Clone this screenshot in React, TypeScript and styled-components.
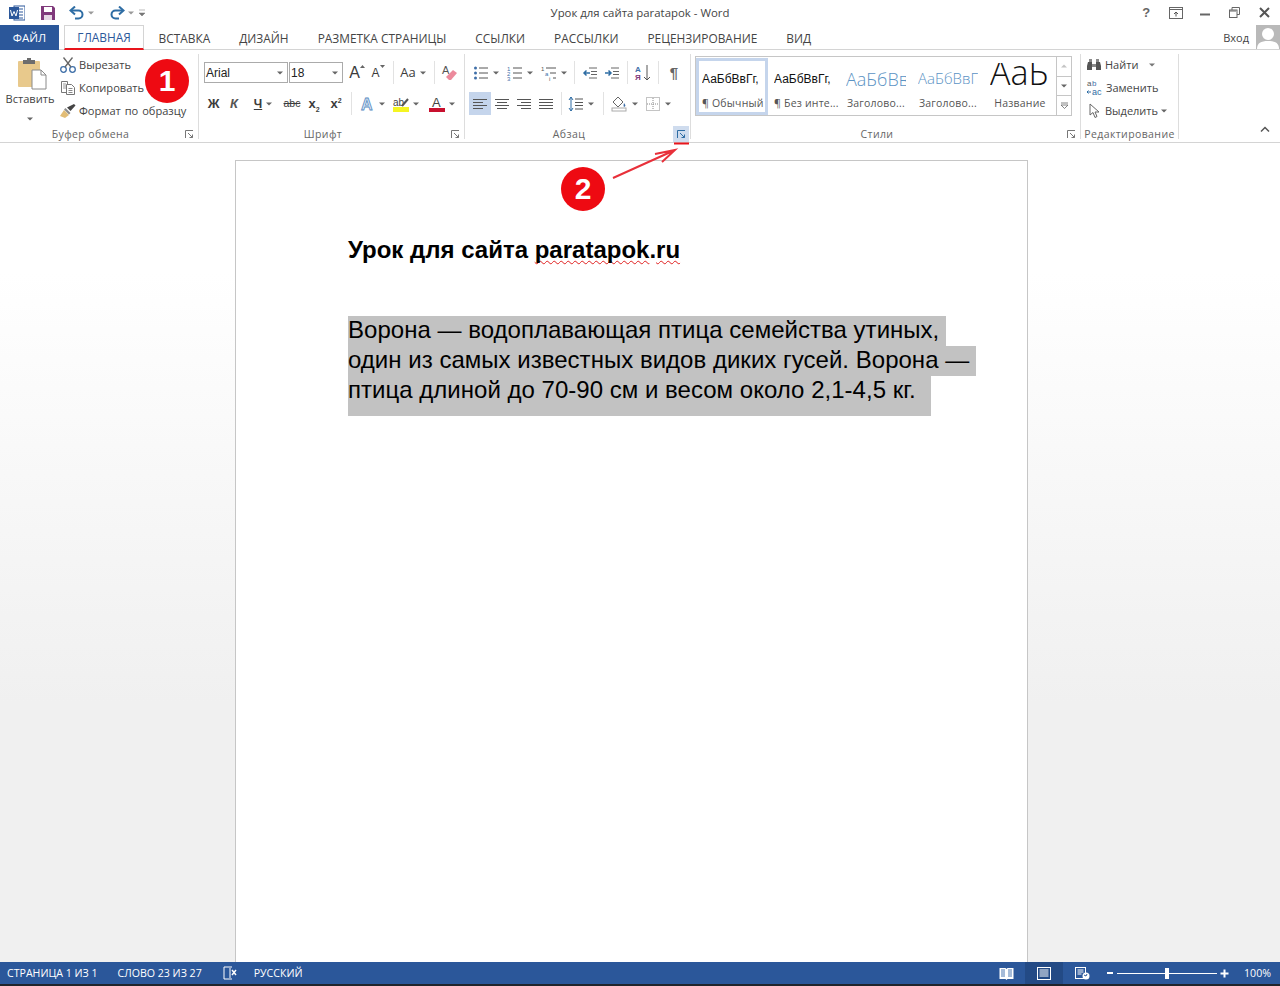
import styled, {createGlobalStyle} from "styled-components";
import type {ReactNode} from "react";

const BLUE = "#2b579a";
const TEXT = "#444444";
const RED = "#e8151d";
const UI_FONT = `"Open Sans", "Noto Sans", sans-serif`;
const DOC_FONT = `"Liberation Sans", Arial, sans-serif`;

const GlobalStyle = createGlobalStyle`
    html, body {
        margin: 0;
        padding: 0;
        background: #ffffff;
    }
`;

const Window = styled.div`
    position: relative;
    width: 1280px;
    height: 986px;
    overflow: hidden;
    display: flex;
    flex-direction: column;
    font-family: ${UI_FONT};
    color: ${TEXT};
    background: #ffffff;
`;

/* title bar */
const TitleBar = styled.div`
    position: relative;
    height: 25px;
    display: flex;
    align-items: center;
    justify-content: space-between;
    flex-shrink: 0;
`;

const QuickAccess = styled.div`
    display: flex;
    align-items: center;
    padding-left: 9px;
`;

const QuickButton = styled.div<{$w: number}>`
    width: ${p => p.$w}px;
    display: flex;
    align-items: center;
    gap: 3px;
`;

const WindowTitle = styled.div`
    position: absolute;
    left: 0;
    right: 0;
    text-align: center;
    font-size: 11.4px;
    color: #444;
`;

const WindowControls = styled.div`
    display: flex;
    align-items: center;
    padding-right: 1px;
`;

const WindowButton = styled.div`
    width: 29.5px;
    display: flex;
    justify-content: center;
`;

/* tabs */
const TabRow = styled.div`
    height: 25px;
    display: flex;
    align-items: stretch;
    flex-shrink: 0;
    box-sizing: border-box;
    border-bottom: 1px solid #d4d4d4;
`;

const FileTab = styled.div`
    width: 59px;
    height: 25px;
    margin-right: 5px;
    background: ${BLUE};
    color: #ffffff;
    font-size: 11.5px;
    display: flex;
    align-items: center;
    justify-content: center;
`;

const Tab = styled.div<{$active?: boolean}>`
    padding: 0 14.5px;
    font-size: 11.9px;
    white-space: nowrap;
    display: flex;
    align-items: center;
    box-sizing: border-box;
    height: 25px;
    ${p => p.$active ? `
        color: ${BLUE};
        width: 80px;
        justify-content: center;
        padding: 0;
        border: 1px solid #d4d4d4;
        border-bottom: 2px solid ${RED};
        margin-right: 0;
    ` : ""}
`;

const SignIn = styled.div`
    margin-left: auto;
    display: flex;
    align-items: center;
    gap: 7px;
    font-size: 11px;
`;

const Avatar = styled.div`
    width: 24px;
    height: 24px;
    background: #b9b9b9;
    overflow: hidden;
`;

/* ribbon */
const Ribbon = styled.div`
    height: 93px;
    display: flex;
    flex-shrink: 0;
    box-sizing: border-box;
    border-bottom: 1px solid #d4d4d4;
`;

const Group = styled.div<{$w: number}>`
    width: ${p => p.$w}px;
    height: 92px;
    box-sizing: border-box;
    display: flex;
    flex-direction: column;
    flex-shrink: 0;
`;

const GroupBody = styled.div`
    flex: 1;
    min-height: 0;
`;

const GroupFooter = styled.div`
    height: 16px;
    display: flex;
    align-items: center;
`;

const GroupLabel = styled.div`
    flex: 1;
    text-align: center;
    font-size: 10.5px;
    letter-spacing: 0.4px;
    color: #666;
    white-space: nowrap;
`;

const Launcher = styled.div<{$active?: boolean}>`
    width: 16px;
    height: 16px;
    margin-right: 1px;
    display: flex;
    align-items: center;
    justify-content: center;
    background: ${p => p.$active ? "#cfdcee" : "transparent"};
`;

const GroupDivider = styled.div`
    width: 1px;
    height: 85px;
    margin-top: 4px;
    background: #dddddd;
    flex-shrink: 0;
`;

const ClipboardBody = styled(GroupBody)`
    display: flex;
    padding: 3px 0 0 5px;
`;

const PasteButton = styled.div`
    width: 50px;
    display: flex;
    flex-direction: column;
    align-items: center;
    padding-top: 4px;
    font-size: 11.1px;
    margin-right: 5px;
`;

const PasteArt = styled.div`
    margin-left: 4px;
    height: 33px;
`;

const PasteLabel = styled.div`
    margin-top: 1px;
    line-height: 16px;
`;

const PasteCaret = styled.div`
    margin-top: 2px;
`;

const ActionList = styled.div`
    display: flex;
    flex-direction: column;
`;

const Action = styled.div`
    height: 23px;
    display: flex;
    align-items: center;
    gap: 3px;
    font-size: 11.1px;
    word-spacing: 1px;
    white-space: nowrap;
`;

const ToolStack = styled(GroupBody)<{$pad: number}>`
    display: flex;
    flex-direction: column;
    gap: 8px;
    padding: 11px 0 0 ${p => p.$pad}px;
`;

const ToolRow = styled.div`
    height: 23px;
    display: flex;
    align-items: center;
`;

const Tool = styled.div<{$w: number; $on?: boolean; $gap?: number}>`
    width: ${p => p.$w}px;
    height: 23px;
    flex-shrink: 0;
    display: flex;
    align-items: center;
    justify-content: center;
    gap: ${p => p.$gap ?? 4}px;
    background: ${p => p.$on ? "#c5d5ec" : "transparent"};
`;

const ToolSep = styled.div<{$l: number; $r: number}>`
    width: 1px;
    height: 23px;
    background: #e2e2e2;
    margin: 0 ${p => p.$r}px 0 ${p => p.$l}px;
    flex-shrink: 0;
`;

const Select = styled.div<{$w: number}>`
    width: ${p => p.$w}px;
    height: 21px;
    box-sizing: border-box;
    border: 1px solid #ababab;
    margin-right: 1px;
    padding: 0 4px 0 1px;
    display: flex;
    align-items: center;
    justify-content: space-between;
    font-family: ${DOC_FONT};
    font-size: 12px;
    color: #222;
    flex-shrink: 0;
`;

const Glyph = styled.span<{$b?: boolean; $i?: boolean; $u?: boolean; $s?: boolean; $size?: number; $font?: string; $color?: string}>`
    font-family: ${p => p.$font ?? DOC_FONT};
    font-size: ${p => p.$size ?? 12}px;
    font-weight: ${p => p.$b ? 700 : 400};
    font-style: ${p => p.$i ? "italic" : "normal"};
    text-decoration: ${p => p.$u ? "underline" : p.$s ? "line-through" : "none"};
    color: ${p => p.$color ?? "#3c3c3c"};
    line-height: 1;
`;

const SizeMark = styled.span`
    align-self: flex-start;
    margin-top: 4px;
    display: flex;
`;

const Sub = styled.sub`
    font-size: 7px;
    line-height: 0;
`;

const Sup = styled.sup`
    font-size: 7px;
    line-height: 0;
`;

/* styles gallery */
const Gallery = styled.div`
    margin: 6px 0 0 4px;
    width: 377px;
    height: 60px;
    box-sizing: border-box;
    border: 1px solid #c6c6c6;
    display: flex;
`;

const StyleItem = styled.div<{$selected?: boolean}>`
    width: 72px;
    box-sizing: border-box;
    flex-shrink: 0;
    border: 3px solid ${p => p.$selected ? "#c5d5ec" : "transparent"};
    padding: 0 3px;
    display: flex;
    flex-direction: column;
    align-items: stretch;
    margin-top: 1px;
`;

const StylePreview = styled.div<{$size: number; $color?: string; $font?: string; $weight?: number}>`
    height: 35px;
    display: flex;
    align-items: center;
    overflow: hidden;
    white-space: nowrap;
    line-height: 1;
    font-family: ${p => p.$font ?? DOC_FONT};
    font-size: ${p => p.$size}px;
    font-weight: ${p => p.$weight ?? 400};
    color: ${p => p.$color ?? "#111"};
`;

/* the big title sample loses its top edge in the gallery */
const TitlePreview = styled(StylePreview)`
    height: 33px;
    margin-top: 2px;
    align-items: flex-start;
    line-height: 18px;
`;

const StyleName = styled.div`
    font-size: 10.5px;
    line-height: 15px;
    letter-spacing: 0.2px;
    white-space: nowrap;
    text-align: center;
    color: #555;
`;

const GalleryScroll = styled.div`
    width: 15px;
    margin-left: auto;
    display: flex;
    flex-direction: column;
    border-left: 1px solid #c6c6c6;
`;

const ScrollButton = styled.div<{$last?: boolean}>`
    flex: 1;
    display: flex;
    align-items: center;
    justify-content: center;
    border-bottom: ${p => p.$last ? "none" : "1px solid #c6c6c6"};
`;

const EditBody = styled(GroupBody)`
    padding: 3px 0 0 5px;
`;

const EditAction = styled(Action)`
    font-size: 11px;
`;

const CollapseRibbon = styled.div`
    margin-left: auto;
    align-self: flex-end;
    padding: 0 10px 4px 0;
`;

/* document */
const DocArea = styled.div`
    flex: 1;
    min-height: 0;
    display: flex;
    padding: 17px 0 0 235px;
    background: linear-gradient(#ffffff 130px, #f0f0f0 560px);
`;

const Page = styled.div`
    width: 793px;
    height: 900px;
    box-sizing: border-box;
    border: 1px solid #c6c6c6;
    background: #ffffff;
    padding: 74px 0 0 112px;
    font-family: ${DOC_FONT};
    color: #000000;
`;

const DocTitle = styled.div`
    font-size: 24px;
    line-height: 30px;
    font-weight: 700;
    white-space: nowrap;
    margin-bottom: 51px;
`;

const Misspelled = styled.span`
    text-decoration: underline wavy #e02020 1px;
    text-decoration-skip-ink: none;
    text-underline-offset: 2px;
`;

const SelectedLine = styled.div<{$w: number; $last?: boolean}>`
    width: ${p => p.$w}px;
    height: ${p => p.$last ? 40 : 30}px;
    background: #c2c2c2;
    font-size: 24px;
    line-height: 28px;
    letter-spacing: 0.02px;
    white-space: nowrap;
`;

/* status bar */
const StatusBar = styled.div`
    height: 22px;
    flex-shrink: 0;
    background: ${BLUE};
    color: #ffffff;
    display: flex;
    align-items: center;
    font-size: 10.6px;
    padding-left: 7px;
`;

const BottomEdge = styled.div`
    height: 2px;
    flex-shrink: 0;
    background: #20242b;
`;

const StatusText = styled.span<{$r: number}>`
    margin-right: ${p => p.$r}px;
    white-space: nowrap;
    display: flex;
`;

const StatusRight = styled.div`
    margin-left: auto;
    display: flex;
    align-items: center;
    height: 100%;
`;

const ViewButton = styled.div<{$on?: boolean}>`
    width: 38px;
    height: 100%;
    display: flex;
    align-items: center;
    justify-content: center;
    background: ${p => p.$on ? "#234a85" : "transparent"};
`;

const Zoom = styled.div`
    display: flex;
    align-items: center;
    margin: 0 0 0 5px;
    gap: 3px;
`;

const ZoomTrack = styled.div`
    position: relative;
    width: 100px;
    height: 1px;
    background: #ffffff;
`;

const ZoomThumb = styled.div`
    position: absolute;
    left: 48px;
    top: -5px;
    width: 4px;
    height: 11px;
    background: #ffffff;
`;

const ZoomLabel = styled.span`
    width: 51px;
    text-align: right;
    padding-right: 9px;
    box-sizing: border-box;
`;

/* red marks drawn on top of the screenshot */
const Badge = styled.div<{$x: number; $y: number}>`
    position: absolute;
    left: ${p => p.$x - 22}px;
    top: ${p => p.$y - 22}px;
    width: 44px;
    height: 44px;
    border-radius: 50%;
    background: #ee0a12;
    color: #ffffff;
    font-family: ${DOC_FONT};
    font-weight: 700;
    font-size: 30px;
    display: flex;
    align-items: center;
    justify-content: center;
`;

const MarkOverlay = styled.svg`
    position: absolute;
    left: 600px;
    top: 140px;
    overflow: visible;
`;

const Svg = ({size = 16, h, children}: {size?: number; h?: number; children: ReactNode}) => (
    <svg width={size} height={h ?? size} viewBox={`0 0 ${size} ${h ?? size}`} fill="none">{children}</svg>
);

const Caret = ({color = "#666"}: {color?: string}) => (
    <Svg size={6} h={4}><path d="M0 0.5h6L3 3.5z" fill={color}/></Svg>
);

const LaunchIcon = ({color = "#777"}: {color?: string}) => (
    <Svg size={9}>
        <path d="M0.5 8V0.5H8" stroke={color}/>
        <path d="M3 3l4.5 4.5M7.5 4.5v3h-3" stroke={color}/>
    </Svg>
);

const Lines = ({rows}: {rows: [number, number][]}) => (
    <Svg>
        {rows.map(([x1, x2], i) => (
            <path key={i} d={`M${x1} ${3.5 + i * 3}H${x2}`} stroke="#555"/>
        ))}
    </Svg>
);

const WordIcon = () => (
    <Svg>
        <rect x="5" y="1" width="11" height="14" fill="#fff" stroke="#2b579a"/>
        <path d="M9 4h5M9 7h5M9 10h5M9 13h5" stroke="#2b579a"/>
        <rect y="2" width="10" height="12" fill="#2b579a"/>
        <path d="M1.5 5l1.5 6 2-4.5 2 4.5 1.5-6" stroke="#fff" strokeWidth="1"/>
    </Svg>
);

const SaveIcon = () => (
    <Svg>
        <path d="M1 1h12l2 2v12H1z" fill="#80397b"/>
        <rect x="4" y="2" width="8" height="5" fill="#fff"/>
        <rect x="4" y="10" width="8" height="5" fill="#e6d7e5"/>
    </Svg>
);

const UndoIcon = ({flip}: {flip?: boolean}) => (
    <svg width="16" height="14" viewBox="0 0 16 14" fill="none" style={flip ? {transform: "scaleX(-1)"} : undefined}>
        <path d="M2.5 4.5h7a4 4 0 0 1 0 8H6" stroke="#2e6da4" strokeWidth="2"/>
        <path d="M6 0.5L1.5 4.5 6 8.5" stroke="#2e6da4" strokeWidth="2"/>
    </svg>
);

const PasteIcon = () => (
    <Svg size={30} h={33}>
        <rect x="1" y="4" width="22" height="26" rx="1" fill="#e8c98c"/>
        <path d="M6 7V3h4V1h4v2h4v4z" fill="#6d6d6d"/>
        <path d="M15 13h9l5 5v14H15z" fill="#fff" stroke="#8a8a8a"/>
        <path d="M24 13v5h5" stroke="#8a8a8a"/>
    </Svg>
);

const ScissorsIcon = () => (
    <Svg>
        <circle cx="3.500" cy="12.500" r="2.800" stroke="#3f6fa8" strokeWidth="1.300"/>
        <circle cx="12.500" cy="12.500" r="2.800" stroke="#3f6fa8" strokeWidth="1.300"/>
        <path d="M5 10L12.500 0.500M11 10L3.500 0.500" stroke="#666" strokeWidth="1.300"/>
    </Svg>
);

const CopyIcon = () => (
    <Svg>
        <path d="M1.500 1.500h6v11h-6z" fill="#fff" stroke="#777"/>
        <path d="M3 4h3M3 6h3M3 8h3" stroke="#999"/>
        <path d="M6.500 4.500h5l3 3v7h-8z" fill="#fff" stroke="#777"/>
        <path d="M8.500 8.500h4M8.500 10.500h4M8.500 12.500h4" stroke="#888"/>
    </Svg>
);

const BrushIcon = () => (
    <Svg size={16}>
        <path d="M0 13l4-6 5 5-4 3z" fill="#e2bd76"/>
        <path d="M4 6.500l5 5 1.500-1.500-5-5z" fill="#8d8d8d"/>
        <path d="M7 4.500l3.500 3.500 5-5.500L14 1z" fill="#444"/>
    </Svg>
);

const EraserIcon = () => (
    <Svg size={18}>
        <text x="1" y="10" fontFamily={DOC_FONT} fontSize="11" fill="#555">A</text>
        <path d="M5 13l7-7 4 3-6 7H8z" fill="#ec8a9c"/>
    </Svg>
);

const TextEffectIcon = () => (
    <Svg size={16}>
        <text x="2" y="14" fontFamily={DOC_FONT} fontSize="16" fontWeight="700" fill="#dbe8f6" stroke="#5a8cc2" strokeWidth="0.800">A</text>
    </Svg>
);

const BulletIcon = () => (
    <Svg>
        <circle cx="2.500" cy="3" r="1.500" fill="#3f6fa8"/>
        <circle cx="2.500" cy="8" r="1.500" fill="#3f6fa8"/>
        <circle cx="2.500" cy="13" r="1.500" fill="#3f6fa8"/>
        <path d="M6 3h9M6 8h9M6 13h9" stroke="#555"/>
    </Svg>
);

const NumberIcon = () => (
    <Svg>
        <text x="0" y="6" fontSize="6" fontFamily={DOC_FONT} fill="#3f6fa8">1</text>
        <text x="0" y="11" fontSize="6" fontFamily={DOC_FONT} fill="#3f6fa8">2</text>
        <text x="0" y="16" fontSize="6" fontFamily={DOC_FONT} fill="#3f6fa8">3</text>
        <path d="M6 3h9M6 8h9M6 13h9" stroke="#555"/>
    </Svg>
);

const MultiIcon = () => (
    <Svg>
        <text x="0" y="6" fontSize="6" fontFamily={DOC_FONT} fill="#555">1</text>
        <text x="4" y="11" fontSize="6" fontFamily={DOC_FONT} fill="#3f6fa8">a</text>
        <text x="8" y="16" fontSize="6" fontFamily={DOC_FONT} fill="#555">i</text>
        <path d="M5 3h10M9 8h6M12 13h3" stroke="#555"/>
    </Svg>
);

const IndentIcon = ({more}: {more?: boolean}) => (
    <Svg>
        <path d="M7 3h8M9 6.500h6M9 9.500h6M7 13h8" stroke="#666"/>
        <path d={more ? "M1 8h6M4.500 5.500L7 8l-2.500 2.500" : "M8 8H2M4.500 5.500L2 8l2.500 2.500"} stroke="#2e6da4" strokeWidth="1.500"/>
    </Svg>
);

const SortIcon = () => (
    <Svg size={18}>
        <text x="1" y="8" fontSize="8" fontWeight="700" fontFamily={DOC_FONT} fill="#3f6fa8">А</text>
        <text x="1" y="16" fontSize="8" fontWeight="700" fontFamily={DOC_FONT} fill="#80397b">Я</text>
        <path d="M13 1v15M10 13l3 3 3-3" stroke="#555"/>
    </Svg>
);

const LineSpacingIcon = () => (
    <Svg>
        <path d="M7 3h8M7 6.500h8M7 9.500h8M7 13h8" stroke="#555"/>
        <path d="M3 1v14M1 4l2-3 2 3M1 12l2 3 2-3" stroke="#2e6da4"/>
    </Svg>
);

const ShadingIcon = () => (
    <Svg size={17}>
        <path d="M2 7l5-5 5 5-5 5z" fill="#fff" stroke="#666"/>
        <path d="M13 8c1 1.500 2 2.500 1 3.500s-2 0-1-3.500z" fill="#3f6fa8"/>
        <rect x="1" y="13" width="14" height="3" fill="#fff" stroke="#aaa"/>
    </Svg>
);

const BordersIcon = () => (
    <Svg>
        <rect x="1.500" y="1.500" width="13" height="13" stroke="#888" strokeDasharray="1 1"/>
        <path d="M8 2v12M2 8h12" stroke="#888" strokeDasharray="1 1"/>
    </Svg>
);

const BinocularsIcon = () => (
    <Svg>
        <path d="M2 5h4v8H1v-4zM10 5h4l1 4v4h-5z" fill="#555"/>
        <path d="M3 2h3v3H3zM10 2h3v3h-3zM6 7h4v3H6z" fill="#8a8a8a"/>
    </Svg>
);

const CursorIcon = () => (
    <Svg>
        <path d="M4 1v11l3-2.500 2 5 2-1-2-4.500h4z" fill="#fff" stroke="#666"/>
    </Svg>
);

const ReplaceIcon = () => (
    <svg width="17" height="17" viewBox="0 0 17 17" fill="none">
        <text x="1" y="7" fontSize="8" fontFamily={DOC_FONT} fill="#555">a</text>
        <text x="6" y="7" fontSize="8" fontFamily={DOC_FONT} fill="#3f6fa8">b</text>
        <text x="6" y="16" fontSize="9" fontFamily={DOC_FONT} fill="#2e6da4">ac</text>
        <path d="M1 13h4M2.500 11.500L1 13l1.500 1.500" stroke="#2e6da4"/>
    </svg>
);

const HelpIcon = () => <Glyph $b $size={13} $color="#666">?</Glyph>;

const RibbonOptionsIcon = () => (
    <Svg size={14} h={12}>
        <rect x="0.500" y="0.500" width="13" height="11" stroke="#666"/>
        <path d="M1 2.500h12" stroke="#666"/>
        <path d="M7 9.500V5M5 7l2-2 2 2" stroke="#555"/>
    </Svg>
);

const MinimizeIcon = () => <Svg size={10} h={10}><path d="M0 6.500h10" stroke="#666" strokeWidth="2"/></Svg>;

const RestoreIcon = () => (
    <Svg size={11} h={11}>
        <rect x="0.500" y="3" width="7.500" height="7.500" stroke="#666"/>
        <path d="M3 3V0.500h7.500V7.500H8" stroke="#666"/>
        <path d="M1 4h6" stroke="#666"/>
    </Svg>
);

const CloseIcon = () => (
    <Svg size={11} h={11}><path d="M1 1l9 9M10 1l-9 9" stroke="#555" strokeWidth="2"/></Svg>
);

const SpellBookIcon = () => (
    <Svg>
        <path d="M7 2H2v12h5M9 2h1M9 14h1" stroke="#fff"/>
        <path d="M10 5l4 5M14 5l-4 5" stroke="#fff" strokeWidth="1.500"/>
        <path d="M8 1v14" stroke="#fff"/>
    </Svg>
);

const ReadIcon = () => (
    <Svg size={15} h={13}>
        <path d="M0.500 1h6l1 1 1-1h6v11h-6l-1 1-1-1h-6z" fill="#fff"/>
        <path d="M2 3h4M2 5h4M2 7h4M2 9h4M9 3h4M9 5h4M9 7h4M9 9h4" stroke="#4d78b2"/>
    </Svg>
);

const PrintIcon = () => (
    <Svg size={14} h={13}>
        <rect x="0.500" y="0.500" width="13" height="12" stroke="#fff"/>
        <path d="M2.500 3h9M2.500 5h9M2.500 7h9M2.500 9h9" stroke="#fff"/>
    </Svg>
);

const WebIcon = () => (
    <Svg size={15} h={13}>
        <rect x="0.500" y="0.500" width="10" height="11" stroke="#fff"/>
        <path d="M2.500 3h6M2.500 5h6M2.500 7h4" stroke="#fff"/>
        <circle cx="11" cy="9" r="3.500" fill="#fff"/>
        <path d="M9 8l2 1 1-2" stroke="#2b579a"/>
    </Svg>
);

const App = () => (
    <Window>
        <GlobalStyle/>
        <TitleBar>
            <QuickAccess>
                <QuickButton $w={31}><WordIcon/></QuickButton>
                <QuickButton $w={29}><SaveIcon/></QuickButton>
                <QuickButton $w={40}><UndoIcon/><Caret color="#999"/></QuickButton>
                <QuickButton $w={30}><UndoIcon flip/><Caret color="#999"/></QuickButton>
                <Svg size={6} h={8}><path d="M0 1h6M0 4h6L3 7z" fill="#777" stroke="#777" strokeWidth="0.500"/></Svg>
            </QuickAccess>
            <WindowTitle>Урок для сайта paratapok - Word</WindowTitle>
            <WindowControls>
                <WindowButton><HelpIcon/></WindowButton>
                <WindowButton><RibbonOptionsIcon/></WindowButton>
                <WindowButton><MinimizeIcon/></WindowButton>
                <WindowButton><RestoreIcon/></WindowButton>
                <WindowButton><CloseIcon/></WindowButton>
            </WindowControls>
        </TitleBar>

        <TabRow>
            <FileTab>ФАЙЛ</FileTab>
            <Tab $active>ГЛАВНАЯ</Tab>
            <Tab>ВСТАВКА</Tab>
            <Tab>ДИЗАЙН</Tab>
            <Tab>РАЗМЕТКА СТРАНИЦЫ</Tab>
            <Tab>ССЫЛКИ</Tab>
            <Tab>РАССЫЛКИ</Tab>
            <Tab>РЕЦЕНЗИРОВАНИЕ</Tab>
            <Tab>ВИД</Tab>
            <SignIn>
                Вход
                <Avatar>
                    <Svg size={24}>
                        <circle cx="12" cy="9" r="6" fill="#fff"/>
                        <path d="M1 24c0-6 4-8 11-8s11 2 11 8z" fill="#fff"/>
                    </Svg>
                </Avatar>
            </SignIn>
        </TabRow>

        <Ribbon>
            <Group $w={198}>
                <ClipboardBody>
                    <PasteButton>
                        <PasteArt><PasteIcon/></PasteArt>
                        <PasteLabel>Вставить</PasteLabel>
                        <PasteCaret><Caret/></PasteCaret>
                    </PasteButton>
                    <ActionList>
                        <Action><ScissorsIcon/>Вырезать</Action>
                        <Action><CopyIcon/>Копировать</Action>
                        <Action><BrushIcon/>Формат по образцу</Action>
                    </ActionList>
                </ClipboardBody>
                <GroupFooter>
                    <GroupLabel>Буфер обмена</GroupLabel>
                    <Launcher><LaunchIcon/></Launcher>
                </GroupFooter>
            </Group>
            <GroupDivider/>

            <Group $w={265}>
                <ToolStack $pad={5}>
                    <ToolRow>
                        <Select $w={84}>Arial<Caret/></Select>
                        <Select $w={54}>18<Caret/></Select>
                        <Tool $w={3}/>
                        <Tool $w={20} $gap={0}>
                            <Glyph $size={16}>A</Glyph>
                            <SizeMark><Svg size={5} h={3}><path d="M0 3h5L2.500 0z" fill="#666"/></Svg></SizeMark>
                        </Tool>
                        <Tool $w={22} $gap={0}>
                            <Glyph $size={12}>A</Glyph>
                            <SizeMark><Svg size={5} h={3}><path d="M0 0h5L2.500 3z" fill="#666"/></Svg></SizeMark>
                        </Tool>
                        <ToolSep $l={4} $r={2}/>
                        <Tool $w={34}><Glyph $size={13} $font={UI_FONT}>Aa</Glyph><Caret/></Tool>
                        <ToolSep $l={4} $r={4}/>
                        <Tool $w={22}><EraserIcon/></Tool>
                    </ToolRow>
                    <ToolRow>
                        <Tool $w={19}><Glyph $b $size={13}>Ж</Glyph></Tool>
                        <Tool $w={22}><Glyph $b $i $size={13} $color="#555">К</Glyph></Tool>
                        <Tool $w={36}><Glyph $b $u>Ч</Glyph><Caret/></Tool>
                        <Tool $w={22}><Glyph $s $size={10.500}>abc</Glyph></Tool>
                        <Tool $w={22}><Glyph $b $size={13}>x<Sub>2</Sub></Glyph></Tool>
                        <Tool $w={22}><Glyph $b $size={13}>x<Sup>2</Sup></Glyph></Tool>
                        <ToolSep $l={4} $r={4}/>
                        <Tool $w={32}><TextEffectIcon/><Caret/></Tool>
                        <Tool $w={36}>
                            <Svg>
                                <rect x="0" y="11" width="16" height="5" fill="#f5f523"/>
                                <text x="0" y="10" fontSize="10" fontFamily={DOC_FONT} fill="#444">ab</text>
                                <path d="M9 10l6-7" stroke="#555" strokeWidth="2"/>
                            </Svg>
                            <Caret/>
                        </Tool>
                        <Tool $w={36}>
                            <Svg>
                                <text x="3" y="11" fontSize="13" fontFamily={DOC_FONT} fill="#444">A</text>
                                <rect x="0" y="12" width="16" height="4" fill="#c8102e"/>
                            </Svg>
                            <Caret/>
                        </Tool>
                    </ToolRow>
                </ToolStack>
                <GroupFooter>
                    <GroupLabel>Шрифт</GroupLabel>
                    <Launcher><LaunchIcon/></Launcher>
                </GroupFooter>
            </Group>
            <GroupDivider/>

            <Group $w={225}>
                <ToolStack $pad={4}>
                    <ToolRow>
                        <Tool $w={34}><BulletIcon/><Caret/></Tool>
                        <Tool $w={34}><NumberIcon/><Caret/></Tool>
                        <Tool $w={33}><MultiIcon/><Caret/></Tool>
                        <ToolSep $l={4} $r={4}/>
                        <Tool $w={22}><IndentIcon/></Tool>
                        <Tool $w={22}><IndentIcon more/></Tool>
                        <ToolSep $l={4} $r={4}/>
                        <Tool $w={22}><SortIcon/></Tool>
                        <ToolSep $l={4} $r={4}/>
                        <Tool $w={22}><Glyph $b $size={15} $color="#666">¶</Glyph></Tool>
                    </ToolRow>
                    <ToolRow>
                        <Tool $w={22} $on><Lines rows={[[1, 15], [1, 11], [1, 15], [1, 11]]}/></Tool>
                        <Tool $w={22}><Lines rows={[[1, 15], [3, 13], [1, 15], [3, 13]]}/></Tool>
                        <Tool $w={22}><Lines rows={[[1, 15], [5, 15], [1, 15], [5, 15]]}/></Tool>
                        <Tool $w={22}><Lines rows={[[1, 15], [1, 15], [1, 15], [1, 15]]}/></Tool>
                        <ToolSep $l={4} $r={2}/>
                        <Tool $w={34}><LineSpacingIcon/><Caret/></Tool>
                        <ToolSep $l={5} $r={3}/>
                        <Tool $w={34}><ShadingIcon/><Caret/></Tool>
                        <Tool $w={34}><BordersIcon/><Caret/></Tool>
                    </ToolRow>
                </ToolStack>
                <GroupFooter>
                    <GroupLabel>Абзац</GroupLabel>
                    <Launcher $active><LaunchIcon color="#2e6da4"/></Launcher>
                </GroupFooter>
            </Group>
            <GroupDivider/>

            <Group $w={389}>
                <GroupBody>
                    <Gallery>
                        <StyleItem $selected>
                            <StylePreview $size={12}>АаБбВвГг,</StylePreview>
                            <StyleName>¶ Обычный</StyleName>
                        </StyleItem>
                        <StyleItem>
                            <StylePreview $size={12}>АаБбВвГг,</StylePreview>
                            <StyleName>¶ Без инте...</StyleName>
                        </StyleItem>
                        <StyleItem>
                            <StylePreview $size={18} $color="#5b93c4" $font={UI_FONT} $weight={300}>АаБбВв</StylePreview>
                            <StyleName>Заголово...</StyleName>
                        </StyleItem>
                        <StyleItem>
                            <StylePreview $size={15} $color="#5b93c4" $font={UI_FONT} $weight={300}>АаБбВвГ</StylePreview>
                            <StyleName>Заголово...</StyleName>
                        </StyleItem>
                        <StyleItem>
                            <TitlePreview $size={34} $font={UI_FONT} $weight={300}>АаБб</TitlePreview>
                            <StyleName>Название</StyleName>
                        </StyleItem>
                        <GalleryScroll>
                            <ScrollButton><Svg size={6} h={4}><path d="M0 3.500h6L3 0.500z" fill="#c4c4c4"/></Svg></ScrollButton>
                            <ScrollButton><Caret/></ScrollButton>
                            <ScrollButton $last>
                                <Svg size={7} h={7}><path d="M0 1h7M0 3h7L3.500 6.500z" stroke="#666" strokeWidth="0.800"/></Svg>
                            </ScrollButton>
                        </GalleryScroll>
                    </Gallery>
                </GroupBody>
                <GroupFooter>
                    <GroupLabel>Стили</GroupLabel>
                    <Launcher><LaunchIcon/></Launcher>
                </GroupFooter>
            </Group>
            <GroupDivider/>

            <Group $w={97}>
                <EditBody>
                    <EditAction>
                        <BinocularsIcon/>Найти
                        <Svg size={14} h={4}><path d="M8 0.500h6l-3 3z" fill="#777"/></Svg>
                    </EditAction>
                    <EditAction><ReplaceIcon/>Заменить</EditAction>
                    <EditAction><CursorIcon/>Выделить<Caret/></EditAction>
                </EditBody>
                <GroupFooter>
                    <GroupLabel>Редактирование</GroupLabel>
                </GroupFooter>
            </Group>
            <GroupDivider/>

            <CollapseRibbon>
                <Svg size={10} h={7}><path d="M1 5.500l4-4 4 4" stroke="#555" strokeWidth="1.500"/></Svg>
            </CollapseRibbon>
        </Ribbon>

        <DocArea>
            <Page>
                <DocTitle>
                    Урок для сайта <Misspelled>paratapok</Misspelled>.<Misspelled>ru</Misspelled>
                </DocTitle>
                <SelectedLine $w={598}>Ворона — водоплавающая птица семейства утиных,</SelectedLine>
                <SelectedLine $w={628}>один из самых известных видов диких гусей. Ворона —</SelectedLine>
                <SelectedLine $w={583} $last>птица длиной до 70-90 см и весом около 2,1-4,5 кг.</SelectedLine>
            </Page>
        </DocArea>

        <StatusBar>
            <StatusText $r={20}>СТРАНИЦА 1 ИЗ 1</StatusText>
            <StatusText $r={20}>СЛОВО 23 ИЗ 27</StatusText>
            <StatusText $r={16}><SpellBookIcon/></StatusText>
            <StatusText $r={0}>РУССКИЙ</StatusText>
            <StatusRight>
                <ViewButton><ReadIcon/></ViewButton>
                <ViewButton $on><PrintIcon/></ViewButton>
                <ViewButton><WebIcon/></ViewButton>
                <Zoom>
                    <Svg size={8} h={8}><path d="M1 4h6" stroke="#fff" strokeWidth="2"/></Svg>
                    <ZoomTrack><ZoomThumb/></ZoomTrack>
                    <Svg size={9} h={9}><path d="M0.500 4.500h8M4.500 0.500v8" stroke="#fff" strokeWidth="2"/></Svg>
                </Zoom>
                <ZoomLabel>100%</ZoomLabel>
            </StatusRight>
        </StatusBar>
        <BottomEdge/>

        <Badge $x={167} $y={81}>1</Badge>
        <Badge $x={583} $y={189}>2</Badge>
        <MarkOverlay width="100" height="50" viewBox="0 0 100 50">
            <path d="M13 38L75 10M55 14L75 10L62 22" stroke="#e8303a" strokeWidth="2" fill="none"/>
            <path d="M74 3.500H89" stroke="#e8151d" strokeWidth="2"/>
        </MarkOverlay>
    </Window>
);

export default App;
